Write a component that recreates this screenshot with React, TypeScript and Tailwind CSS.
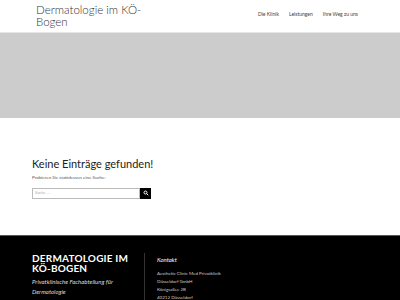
import React from 'react';

export default function App() {
  return (
    <div className="w-[400px] min-h-[300px] bg-white font-['Lato',sans-serif] overflow-hidden">
      {/* header */}
      <header className="h-[32px] flex items-start justify-between pl-[36px] pr-[42px]">
        <div className="pt-[4px] text-[11.5px] leading-[11.5px] text-[#333] font-light">
          Dermatologie im KÖ-<br />Bogen
        </div>
        <nav className="flex gap-[10px] pt-[11px] text-[5px] text-[#444]">
          <span>Die Klinik</span>
          <span>Leistungen</span>
          <span>Ihre Weg zu uns</span>
        </nav>
      </header>

      {/* hero */}
      <div className="h-[86px] bg-[#cccccc] border-t border-[#e6e6e6]" />

      {/* content */}
      <main className="px-[32px] pt-[39px] h-[117px]">
        <h1 className="text-[11px] leading-[14px] text-[#222]">Keine Einträge gefunden!</h1>
        <p className="mt-[4px] text-[4.5px] text-[#555]">Probieren Sie stattdessen eine Suche:</p>
        <div className="mt-[6px] flex w-[119px] h-[11px]">
          <div className="flex-1 border border-[#bbb] text-[4px] text-[#aaa] pl-[2px] flex items-center">Suche …</div>
          <div className="w-[11px] bg-black flex items-center justify-center">
            <svg width="6" height="6" viewBox="0 0 24 24" fill="none" stroke="white" strokeWidth="4">
              <circle cx="10" cy="10" r="6" />
              <path d="M15 15l6 6" />
            </svg>
          </div>
        </div>
      </main>

      {/* footer */}
      <footer className="bg-black border-t border-[#555] h-[65px] flex pl-[32px] pt-[17px]">
        <div className="w-[112px] pr-[6px]">
          <div className="text-white font-bold text-[10px] leading-[10px] tracking-[0.2px]">DERMATOLOGIE IM KÖ-BOGEN</div>
          <div className="mt-[4px] text-[#ddd] italic text-[6px] leading-[10px]">
            Privatklinische Fachabteilung für Dermatologie
          </div>
        </div>
        <div className="border-l border-[#333] pl-[12px] pt-[2px]">
          <div className="text-white italic text-[6px]">Kontakt</div>
          <div className="mt-[6px] text-[#ccc] text-[4.5px] leading-[8px]">
            <div>Aesthetic Clinic Med Privatklinik</div>
            <div>Düsseldorf GmbH</div>
            <div>Königsallee 2B</div>
            <div>40212 Düsseldorf</div>
          </div>
        </div>
      </footer>
    </div>
  );
}
